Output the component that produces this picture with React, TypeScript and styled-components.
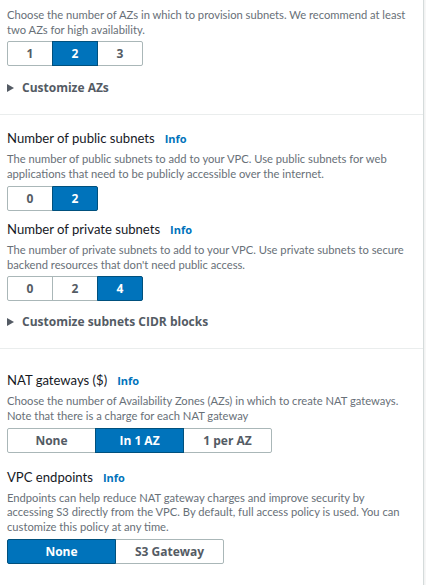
import React from "react";
import styled, { createGlobalStyle } from "styled-components";

const Global = createGlobalStyle`
  html, body { margin: 0; padding: 0; background: #ffffff; }
  body { font-family: "Open Sans", "Noto Sans", Arial, sans-serif; }
`;

const Panel = styled.div`
  width: 424px;
  height: 585px;
  box-sizing: border-box;
  border-right: 1px solid #d5dbdb;
  box-shadow: 1px 0 0 #f2f3f3, 2px 0 0 #f7f7f7;
  background: #fff;
  overflow: hidden;
`;

const Section = styled.div<{ $top: number; $bottom: number; $divider?: boolean }>`
  padding: ${(p) => p.$top}px 0 ${(p) => p.$bottom}px 7px;
  border-top: ${(p) => (p.$divider ? "1px solid #eaeded" : "none")};
  display: flex;
  flex-direction: column;
`;

const Field = styled.div<{ $gap?: number }>`
  display: flex;
  flex-direction: column;
  margin-top: ${(p) => p.$gap ?? 0}px;
`;

const Label = styled.div`
  display: flex;
  align-items: baseline;
  gap: 10px;
  font-family: Lato, "Open Sans", sans-serif;
  font-size: 13.1px;
  line-height: 18px;
  color: #16191f;
`;

const Info = styled.span`
  color: #0073bb;
  font-family: "Open Sans", sans-serif;
  font-weight: 700;
  font-size: 11px;
`;

const Desc = styled.div<{ $first?: boolean }>`
  margin-top: ${(p) => (p.$first ? 0 : 4)}px;
  font-family: Lato, "Open Sans", sans-serif;
  font-size: 11.2px;
  line-height: 14.7px;
  color: #687078;
  white-space: nowrap;
`;

const Segmented = styled.div`
  display: flex;
  margin-top: 4px;
  align-self: flex-start;
`;

const Seg = styled.button<{ $w: number; $on?: boolean }>`
  width: ${(p) => p.$w}px;
  height: 25px;
  box-sizing: border-box;
  margin: 0 0 0 -1px;
  padding: 0;
  border: 1px solid ${(p) => (p.$on ? "#00507d" : "#aab7b8")};
  background: ${(p) => (p.$on ? "#0073bb" : "#ffffff")};
  color: ${(p) => (p.$on ? "#ffffff" : "#545b64")};
  font-family: inherit;
  font-weight: 700;
  font-size: 12px;
  position: ${(p) => (p.$on ? "relative" : "static")};
  &:first-child {
    margin-left: 0;
    border-radius: 2px 0 0 2px;
  }
  &:last-child {
    border-radius: 0 2px 2px 0;
  }
`;

const Expander = styled.div<{ $gap: number }>`
  display: flex;
  align-items: center;
  gap: 8px;
  margin-top: ${(p) => p.$gap}px;
  font-size: 12px;
  font-weight: 700;
  line-height: 16px;
  color: #545b64;
`;

const Caret = styled.span`
  width: 0;
  height: 0;
  border-top: 4px solid transparent;
  border-bottom: 4px solid transparent;
  border-left: 7px solid #545b64;
`;

type Opt = { label: string; on?: boolean };

const Group = ({ w, opts }: { w: number; opts: Opt[] }) => (
  <Segmented>
    {opts.map((o) => (
      <Seg key={o.label} $w={w} $on={o.on}>
        {o.label}
      </Seg>
    ))}
  </Segmented>
);

export default function App() {
  return (
    <>
      <Global />
      <Panel>
        <Section $top={8} $bottom={18}>
          <Desc $first>
            Choose the number of AZs in which to provision subnets. We recommend at least
            <br />
            two AZs for high availability.
          </Desc>
          <Group w={46} opts={[{ label: "1" }, { label: "2", on: true }, { label: "3" }]} />
          <Expander $gap={14}>
            <Caret />
            Customize AZs
          </Expander>
        </Section>
        <Section $top={14} $bottom={18} $divider>
          <Field>
            <Label>
              Number of public subnets <Info>Info</Info>
            </Label>
            <Desc>
              The number of public subnets to add to your VPC. Use public subnets for web
              <br />
              applications that need to be publicly accessible over the internet.
            </Desc>
            <Group w={46} opts={[{ label: "0" }, { label: "2", on: true }]} />
          </Field>
          <Field $gap={9}>
            <Label>
              Number of private subnets <Info>Info</Info>
            </Label>
            <Desc>
              The number of private subnets to add to your VPC. Use private subnets to secure
              <br />
              backend resources that don't need public access.
            </Desc>
            <Group w={46} opts={[{ label: "0" }, { label: "2" }, { label: "4", on: true }]} />
          </Field>
          <Expander $gap={13}>
            <Caret />
            Customize subnets CIDR blocks
          </Expander>
        </Section>
        <Section $top={22} $bottom={20} $divider>
          <Field>
            <Label>
              NAT gateways ($) <Info>Info</Info>
            </Label>
            <Desc>
              Choose the number of Availability Zones (AZs) in which to create NAT gateways.
              <br />
              Note that there is a charge for each NAT gateway
            </Desc>
            <Group
              w={89}
              opts={[{ label: "None" }, { label: "In 1 AZ", on: true }, { label: "1 per AZ" }]}
            />
          </Field>
          <Field $gap={15}>
            <Label>
              VPC endpoints <Info>Info</Info>
            </Label>
            <Desc>
              Endpoints can help reduce NAT gateway charges and improve security by
              <br />
              accessing S3 directly from the VPC. By default, full access policy is used. You can
              <br />
              customize this policy at any time.
            </Desc>
            <Group w={109} opts={[{ label: "None", on: true }, { label: "S3 Gateway" }]} />
          </Field>
        </Section>
      </Panel>
    </>
  );
}
